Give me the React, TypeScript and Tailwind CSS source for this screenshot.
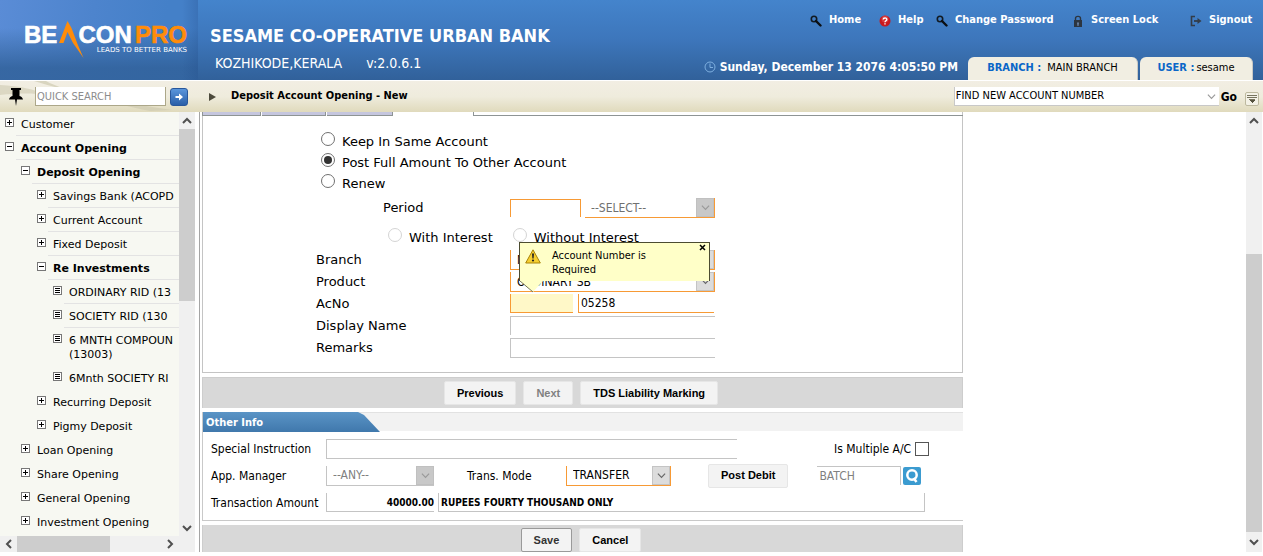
import React from "react";

type Kind = "plus" | "minus" | "leaf";

const TAHOMA = "font-['DejaVu_Sans_Condensed','DejaVu_Sans',sans-serif]";

const tree: { label: string; kind: Kind; indent: string; bold?: boolean; line?: boolean; sub?: string }[] = [
  { label: "Customer", kind: "plus", indent: "ml-0", line: true },
  { label: "Account Opening", kind: "minus", indent: "ml-0", bold: true, line: true },
  { label: "Deposit Opening", kind: "minus", indent: "ml-4", bold: true, line: true },
  { label: "Savings Bank (ACOPD", kind: "plus", indent: "ml-8", line: true },
  { label: "Current Account", kind: "plus", indent: "ml-8", line: true },
  { label: "Fixed Deposit", kind: "plus", indent: "ml-8", line: true },
  { label: "Re Investments", kind: "minus", indent: "ml-8", bold: true, line: true },
  { label: "ORDINARY RID (13", kind: "leaf", indent: "ml-12", line: true },
  { label: "SOCIETY RID (130", kind: "leaf", indent: "ml-12", line: true },
  { label: "6 MNTH COMPOUN", kind: "leaf", indent: "ml-12", sub: "(13003)" },
  { label: "6Mnth SOCIETY RI", kind: "leaf", indent: "ml-12" },
  { label: "Recurring Deposit", kind: "plus", indent: "ml-8" },
  { label: "Pigmy Deposit", kind: "plus", indent: "ml-8" },
  { label: "Loan Opening", kind: "plus", indent: "ml-4" },
  { label: "Share Opening", kind: "plus", indent: "ml-4" },
  { label: "General Opening", kind: "plus", indent: "ml-4" },
  { label: "Investment Opening", kind: "plus", indent: "ml-4" },
];

function TreeIcon({ kind }: { kind: Kind }) {
  return (
    <svg viewBox="0 0 9 9" className="size-[9px] shrink-0" shapeRendering="crispEdges" aria-hidden="true">
      <rect x="0.5" y="0.5" width="8" height="8" fill="#fff" stroke="#777" />
      {kind !== "leaf" && <path d="M2 4h5v1h-5z" fill="#000" />}
      {kind === "plus" && <path d="M4 2h1v5h-1z" fill="#000" />}
      {kind === "leaf" && <path d="M2 2h5v1h-5zM2 4h5v1h-5zM2 6h5v1h-5z" fill="#000" />}
    </svg>
  );
}

function Chevron({ dir, color = "#505050", thin }: { dir: "up" | "down" | "left" | "right"; color?: string; thin?: boolean }) {
  const d = {
    up: "M1 7L5 3L9 7",
    down: "M1 3L5 7L9 3",
    left: "M7 1L3 5L7 9",
    right: "M3 1L7 5L3 9",
  }[dir];
  return (
    <svg viewBox="0 0 10 10" className={`shrink-0 ${thin ? "size-[9px]" : "size-[10px]"}`} aria-hidden="true">
      <path d={d} fill="none" stroke={color} strokeWidth={thin ? 1.3 : 2} />
    </svg>
  );
}

function Sidebar() {
  return (
    <aside className="flex w-[195px] shrink-0 flex-col bg-[#f7f8f2]">
      <div className="flex min-h-0 flex-1">
        <nav aria-label="Main menu" className="min-w-0 flex-1 overflow-hidden font-['DejaVu_Sans',sans-serif] text-[11px] leading-[14px]">
          <ul>
            {tree.map((n) => (
              <li key={n.label} className={`flex ${n.indent}`}>
                <span className="flex w-4 shrink-0 justify-end pt-[6px] pr-[2px]">
                  <TreeIcon kind={n.kind} />
                </span>
                <a
                  href="#"
                  className={`min-w-0 flex-1 border-b pt-[6px] pb-[3px] pl-[5px] whitespace-nowrap text-black ${
                    n.line ? "border-[#e3e3e3]" : "border-transparent"
                  } ${n.bold ? "font-bold" : ""}`}
                >
                  {n.label}
                  {n.sub && <span className="block">{n.sub}</span>}
                </a>
              </li>
            ))}
          </ul>
        </nav>
        <div className="flex w-4 shrink-0 flex-col items-center bg-[#f0f0f0]">
          <span className="flex h-[17px] items-center"><Chevron dir="up" /></span>
          <span className="h-[172px] w-4 bg-[#cdcdcd]" />
          <span className="flex-1" />
          <span className="flex h-[17px] items-center"><Chevron dir="down" /></span>
        </div>
      </div>
      <div className="flex h-4 shrink-0 items-center bg-[#f0f0f0]">
        <span className="flex w-[17px] justify-center"><Chevron dir="left" /></span>
        <span className="h-4 w-[93px] bg-[#cdcdcd]" />
        <span className="flex-1" />
        <span className="flex w-[17px] justify-center"><Chevron dir="right" /></span>
        <span className="w-[17px]" />
      </div>
    </aside>
  );
}

function Logo() {
  return (
    <div className="w-[198px] shrink-0 bg-[linear-gradient(270deg,rgba(30,70,130,0.25)_0%,rgba(30,70,130,0)_8%),linear-gradient(180deg,rgba(49,97,154,0)_35%,rgba(49,97,154,0.85)_85%),linear-gradient(100deg,#5a8cd6_0%,#4d84cd_45%,#4480c8_80%)] pt-6 pl-6">
      <div className="relative w-[163px] font-['Liberation_Sans',sans-serif] text-[24px] leading-[22px] font-bold">
        <div className="flex justify-between [-webkit-text-stroke:0.6px]">
          <span className="text-white">BE</span>
          <span className="ml-[18px] text-white">CON</span>
          <span className="text-[#ff8c0a]">PRO</span>
        </div>
        <div className="text-right font-['DejaVu_Sans',sans-serif] text-[7px] leading-[8px] font-normal text-white">LEADS TO BETTER BANKS</div>
        <svg viewBox="0 0 26 38" className="absolute -top-[3px] left-[35px] h-[38px] w-[26px]" aria-hidden="true">
          <path d="M8.500 0L12.500 7L18.500 23L24.500 37L14 22L8.500 11L4.500 22H0Z" fill="#ff8c0a" />
        </svg>
      </div>
    </div>
  );
}

function KeyIcon() {
  return (
    <svg viewBox="0 0 12 12" className="size-3" aria-hidden="true">
      <circle cx="4" cy="4" r="2.700" fill="none" stroke="#111a22" strokeWidth="1.600" />
      <path d="M6 6L10.500 10.500" stroke="#0b0f14" strokeWidth="2.400" strokeLinecap="round" />
    </svg>
  );
}

function HelpIcon() {
  return (
    <svg viewBox="0 0 12 12" className="size-3" aria-hidden="true">
      <circle cx="6" cy="6" r="5.500" fill="#c8181c" />
      <circle cx="6" cy="4" r="3.500" fill="#e05050" opacity=".6" />
      <path d="M4.200 4.600C4.200 2.400 7.800 2.400 7.800 4.500C7.800 5.800 6 5.700 6 7.200M6 8.300V9.600" fill="none" stroke="#fff" strokeWidth="1.400" />
    </svg>
  );
}

function LockIcon() {
  return (
    <svg viewBox="0 0 12 12" className="size-3" aria-hidden="true">
      <path d="M3.500 6V3.500C3.500 .6 8.500 .6 8.500 3.500V6" fill="none" stroke="#2c3540" strokeWidth="1.400" />
      <rect x="2" y="5" width="8" height="7" fill="#2c3540" />
      <path d="M5 7.500h2l-.5 3.500h-1z" fill="#6c86a8" />
    </svg>
  );
}

function ExitIcon() {
  return (
    <svg viewBox="0 0 12 12" className="size-3" aria-hidden="true">
      <path d="M5 1.500H1.500V10.500H5" fill="none" stroke="#333c48" strokeWidth="1.600" />
      <path d="M4 6H9" stroke="#333c48" strokeWidth="1.800" />
      <path d="M7.500 3L11.500 6L7.500 9Z" fill="#333c48" />
    </svg>
  );
}

function TopLink({ icon, label, className }: { icon: React.ReactNode; label: string; className: string }) {
  return (
    <a href="#" className={`flex items-center gap-[7px] whitespace-nowrap ${className}`}>
      <span className="pt-[2px]">{icon}</span>
      {label}
    </a>
  );
}

function Header() {
  return (
    <header className={`flex h-20 shrink-0 bg-linear-to-b from-[#4484cc] via-[#3d76bb] to-[#31619a] text-white ${TAHOMA}`}>
      <Logo />
      <div className="flex-1 pt-6 pl-3">
        <h1 className="text-[18px] leading-6 font-bold whitespace-nowrap">SESAME CO-OPERATIVE URBAN BANK</h1>
        <p className="flex gap-6 pt-[7px] pl-[5px] text-[14px] leading-4">
          <span>KOZHIKODE,KERALA</span>
          <span>v:2.0.6.1</span>
        </p>
      </div>
      <div className="flex flex-col items-end justify-between pt-3 text-[11px] font-bold">
        <nav aria-label="Session" className="flex pr-[9px] leading-4">
          <TopLink icon={<KeyIcon />} label="Home" className="w-[69px]" />
          <TopLink icon={<HelpIcon />} label="Help" className="w-[57px]" />
          <TopLink icon={<KeyIcon />} label="Change Password" className="w-[136px]" />
          <TopLink icon={<LockIcon />} label="Screen Lock" className="w-[118px]" />
          <TopLink icon={<ExitIcon />} label="Signout" className="w-[64px]" />
        </nav>
        <div className="flex items-end pr-[10px]">
          <div className="flex h-[26px] items-center gap-1 pr-[10px] text-[12px] whitespace-nowrap">
            <svg viewBox="0 0 12 12" className="size-3" aria-hidden="true">
              <circle cx="6" cy="6" r="5" fill="none" stroke="#7fb0e0" />
              <path d="M6 2.500V6.500H9" fill="none" stroke="#7fb0e0" />
            </svg>
            Sunday, December 13 2076 4:05:50 PM
          </div>
          <div className="flex h-[23px] w-[170px] items-center justify-center gap-[6px] rounded-t-md border-r border-[#c9c9c4] bg-[#f1eee2] font-normal text-black">
            <b className="text-[#0a66c8]">BRANCH :</b>MAIN BRANCH
          </div>
          <div className="ml-[2px] flex h-[23px] w-[113px] items-center justify-center gap-[2px] rounded-t-md border-r border-[#c9c9c4] bg-[#f1eee2] font-normal text-black">
            <b className="text-[#0a66c8]">USER :</b>sesame
          </div>
        </div>
      </div>
    </header>
  );
}

function Toolbar() {
  return (
    <div className={`relative isolate flex h-8 shrink-0 border-t border-white bg-linear-to-b from-[#f2eee3] via-[#efecdd] to-[#e0dabc] text-[11px] ${TAHOMA}`}>
      <svg viewBox="0 0 200 31" className="absolute top-0 left-0 -z-10 h-[31px] w-[200px]" aria-hidden="true">
        <path d="M0 4C20 5 34 8 46 14C34 12 18 12 0 14Z" fill="#cfcab0" opacity=".6" />
        <path d="M34 0C60 8 110 20 172 29L150 30C110 22 64 10 46 0Z" fill="#cfcab0" opacity=".7" />
      </svg>
      <div className="flex w-[199px] shrink-0 items-center pl-2">
        <svg viewBox="0 0 16 18" className="mr-[11px] h-[18px] w-4" aria-hidden="true">
          <path d="M3 0H13V2H11.500V8C13.500 8.500 14.500 9.500 15 11.500H9L8 18L7 11.500H1C1.500 9.500 2.500 8.500 4.500 8V2H3Z" fill="#000" />
        </svg>
        <input
          aria-label="Quick search"
          placeholder="QUICK SEARCH"
          className="h-[19px] w-[131px] border-r border-b border-l border-[#aca789] bg-white px-[1px] outline-none placeholder:text-[#8c8c8c]"
        />
        <button type="button" aria-label="Search" className="ml-1 flex size-[18px] items-center justify-center rounded-[3px] border border-[#28579c] bg-linear-to-b from-[#5a96dc] to-[#2a5fa8]">
          <svg viewBox="0 0 10 10" className="size-[10px]" aria-hidden="true">
            <path d="M1.500 4H5V1.500L9 5L5 8.500V6H1.500Z" fill="#fff" />
          </svg>
        </button>
      </div>
      <div className="flex flex-1 items-center pl-[10px]">
        <svg viewBox="0 0 7 8" className="h-2 w-[7px]" aria-hidden="true"><path d="M0 0L7 4L0 8Z" fill="#4c4a3c" /></svg>
        <h2 className="ml-[15px] font-bold whitespace-nowrap">Deposit Account Opening - New</h2>
      </div>
      <div className="flex items-center pr-1">
        <div className="flex h-[19px] w-[265px] items-center border-b border-l border-[#c8c8c8] bg-white">
          <select aria-label="Find" className="h-full min-w-0 flex-1 appearance-none px-[1px] outline-none">
            <option>FIND NEW ACCOUNT NUMBER</option>
          </select>
          <span className="flex w-[15px] justify-center"><Chevron dir="down" color="#999" thin /></span>
        </div>
        <button type="button" className="ml-[2px] text-[12px] font-bold">Go</button>
        <button type="button" aria-label="More" className="mt-1 ml-2 flex h-[14px] w-[14px] items-center justify-center rounded-[2px] border border-[#bdb99f] bg-[#f3f1e6]">
          <svg viewBox="0 0 10 10" className="size-[10px]" shapeRendering="crispEdges" aria-hidden="true">
            <path d="M0 1h10v1h-10zM0 3h10v1h-10zM2 5h6v1h-6z" fill="#77745f" />
            <path d="M2 6H8L5 9Z" fill="#55523f" />
          </svg>
        </button>
      </div>
    </div>
  );
}

function Select({ id, value, box, border, arrow, text = "text-black", disabled, label }: {
  id?: string; value: string; box: string; border: string; arrow: string; text?: string; disabled?: boolean; label?: string;
}) {
  return (
    <div className={`flex h-5 bg-white ${box} ${border}`}>
      <select id={id} aria-label={label} disabled={disabled} className={`min-w-0 flex-1 appearance-none pl-[6px] opacity-100 outline-none ${text}`}>
        <option>{value}</option>
      </select>
      <span className={`flex w-[18px] shrink-0 items-center justify-center border ${arrow}`}>
        <Chevron dir="down" color={disabled ? "#999" : "#666"} thin />
      </span>
    </div>
  );
}

function Radio({ name, checked, disabled, label }: { name: string; checked?: boolean; disabled?: boolean; label: string }) {
  return (
    <label className="flex h-[21px] gap-[7px]">
      <input
        type="radio"
        name={name}
        defaultChecked={checked}
        disabled={disabled}
        className="mt-[1px] size-[14px] shrink-0 appearance-none rounded-full border border-[#707070] bg-white bg-clip-content p-[2px] checked:bg-[#333] disabled:border-[#d4d4d4]"
      />
      <span className="leading-[21px] whitespace-nowrap">{label}</span>
    </label>
  );
}

function AccountTooltip() {
  return (
    <div role="alert" className="absolute -top-[52px] left-[9px] z-10 w-[191px]">
      <div className="flex h-[39px] border-x border-t border-[#4c4c30] bg-[#ffffc8] pt-[6px] pl-[5px] text-[11px] leading-[14px]">
        <svg viewBox="0 0 16 15" className="h-[15px] w-4 shrink-0" aria-hidden="true">
          <path d="M8 .8L15.300 14H.7Z" fill="#f6cf30" stroke="#a88208" strokeLinejoin="round" />
          <path d="M7 4.500H9L8.600 9.500H7.400Z" fill="#222" />
          <circle cx="8" cy="11.500" r="1.100" fill="#222" />
        </svg>
        <p className="ml-[11px] w-[110px]">Account Number is Required</p>
      </div>
      <button type="button" aria-label="Close" className="absolute top-[2px] right-1 flex size-[7px]">
        <svg viewBox="0 0 7 7" className="size-[7px]" aria-hidden="true"><path d="M1 1L6 6M6 1L1 6" stroke="#000" strokeWidth="1.500" /></svg>
      </button>
      <svg viewBox="0 0 24 12" className="h-3 w-6" aria-hidden="true">
        <path d="M1 0H24L14 11Z" fill="#ffffc8" />
        <path d="M1 0L14 11" stroke="#77775a" fill="none" />
      </svg>
    </div>
  );
}

const ORANGE = "border-[#f79a35]";

function MaturityPanel() {
  return (
    <section className="border-x border-b border-[#c4c4c4] bg-white pb-[14px] font-['DejaVu_Sans',sans-serif] text-[13px]">
      <div className="-mx-px flex h-1">
        <span className="w-[59px] border-r border-b border-l border-[#8e9494] bg-[#c5c6de]" />
        <span className="ml-px w-[64px] border-r border-b border-[#8e9494] bg-[#c5c6de]" />
        <span className="ml-px w-[66px] border-r border-b border-[#8e9494] bg-[#c5c6de]" />
        <span className="w-[80px]" />
        <span className="flex-1 border-b border-l border-[#8e9494]" />
      </div>
      <div className="pt-[15px] pl-[118px]">
        <Radio name="maturity" label="Keep In Same Account" />
        <Radio name="maturity" label="Post Full Amount To Other Account" checked />
        <Radio name="maturity" label="Renew" />
      </div>
      <div className="flex items-center pt-1 pl-[180px]">
        <label htmlFor="period" className="w-[127px]">Period</label>
        <input id="period" disabled className={`h-[18px] w-[71px] border-x border-t bg-white ${ORANGE}`} />
        <Select label="Period unit" value="--SELECT--" disabled text="text-[#707070]" box={`ml-1 w-[130px] text-[12px] ${TAHOMA}`} border={`border-r border-b ${ORANGE}`} arrow="border-[#c0c0c0] bg-[#c8c8c8]" />
      </div>
      <div className="flex gap-5 pt-[9px] pl-[185px]">
        <Radio name="interest" label="With Interest" disabled />
        <Radio name="interest" label="Without Interest" disabled />
      </div>
      <div className="grid grid-cols-[194px_205px] gap-y-[2px] pt-[2px] pl-[113px] leading-5">
        <label htmlFor="branch">Branch</label>
        <Select id="branch" value="MAIN BRANCH" box={`text-[12px] ${TAHOMA}`} border={`border-x border-b ${ORANGE}`} arrow="border-[#c4c4c4] bg-[#dcdcdc]" />
        <label htmlFor="product">Product</label>
        <Select id="product" value="ORDINARY SB" box={`text-[12px] ${TAHOMA}`} border={`border-x border-b ${ORANGE}`} arrow="border-[#c4c4c4] bg-[#dcdcdc]" />
        <label htmlFor="acno">AcNo</label>
        <div className={`relative flex gap-[5px] text-[12px] ${TAHOMA}`}>
          <input id="acno" className={`h-[19px] w-[63px] border-b border-l bg-[#fff8c8] ${ORANGE}`} />
          <input aria-label="Account suffix" defaultValue="05258" className={`h-[19px] w-[136px] border-b border-l bg-white pl-[2px] ${ORANGE}`} />
          <AccountTooltip />
        </div>
        <label htmlFor="display">Display Name</label>
        <input id="display" className="h-[19px] border-t border-l border-[#c4c4c4] bg-white" />
        <label htmlFor="remarks">Remarks</label>
        <input id="remarks" className="h-5 border-y border-l border-[#c4c4c4] bg-white" />
      </div>
    </section>
  );
}

function BarButton({ children, muted, focused, disabled }: { children: React.ReactNode; muted?: boolean; focused?: boolean; disabled?: boolean }) {
  return (
    <button
      type="button"
      disabled={disabled}
      className={`h-6 rounded-[2px] border bg-[#f3f3f3] px-3 font-['Liberation_Sans',sans-serif] text-[11px] font-bold whitespace-nowrap ${
        focused ? "border-[#9a9a9a]" : "border-[#e6e6e6]"
      } ${disabled ? "text-[#808080]" : muted ? "text-[#333]" : "text-black"}`}
    >
      {children}
    </button>
  );
}

function OtherInfo() {
  return (
    <section className={`mt-1 h-[109px] border-b border-l border-[#c9c9c9] bg-white text-[12px] ${TAHOMA}`}>
      <div className="flex h-[19px] border-t border-[#e2e2e2] bg-[#f2f2f2]">
        <h3 className="-mt-px h-5 w-[177px] bg-linear-to-b from-[#5a94c6] to-[#4078ac] pl-[3px] text-[11px] leading-[22px] font-bold text-white [clip-path:polygon(0_0,155px_0,161px_3px,177px_100%,0_100%)]">Other Info</h3>
      </div>
      <div className="flex items-center pt-2 pl-2">
        <label htmlFor="special" className="w-[115px]">Special Instruction</label>
        <input id="special" className="h-5 w-[411px] border-y border-l border-[#c4c4c4]" />
        <label className="ml-[97px] flex items-center gap-1 whitespace-nowrap">
          Is Multiple A/C
          <input type="checkbox" className="size-[14px] appearance-none border border-[#555] bg-white" />
        </label>
      </div>
      <div className="flex h-[27px] items-center pt-[6px] pl-2">
        <label htmlFor="manager" className="w-[115px]">App. Manager</label>
        <Select id="manager" value="--ANY--" disabled text="text-[#808080]" box="w-[108px]" border="border-b border-l border-[#c4c4c4]" arrow="border-[#c0c0c0] bg-[#c8c8c8]" />
        <label htmlFor="mode" className="ml-[33px] w-[99px]">Trans. Mode</label>
        <Select id="mode" value="TRANSFER" box="w-[105px]" border={`border-x border-b ${ORANGE}`} arrow="border-[#c4c4c4] bg-[#dcdcdc]" />
        <span className="ml-[37px] flex"><BarButton>Post Debit</BarButton></span>
        <input aria-label="Batch" placeholder="BATCH" className="ml-[29px] h-[19px] w-[84px] border-t border-r border-[#c4c4c4] pl-[2px] placeholder:text-[#808080]" />
        <button type="button" aria-label="Find batch" className="ml-[2px] flex size-[18px] items-center justify-center rounded-[2px] bg-[#3b9bd0]">
          <svg viewBox="0 0 18 18" className="size-[18px]" aria-hidden="true">
            <circle cx="9" cy="8" r="4.700" fill="none" stroke="#fff" strokeWidth="2.500" />
            <path d="M10.500 11L13.500 15" stroke="#fff" strokeWidth="2.500" />
          </svg>
        </button>
      </div>
      <div className="flex items-center pt-[7px] pl-2">
        <label htmlFor="amount" className="w-[115px]">Transaction Amount</label>
        <input id="amount" defaultValue="40000.00" className="h-[19px] w-[108px] border-b border-l border-[#c4c4c4] text-right text-[10px] font-bold" />
        <input aria-label="Amount in words" defaultValue="RUPEES FOURTY THOUSAND ONLY" className="ml-1 h-[19px] w-[487px] border-r border-b border-l border-[#c4c4c4] pl-[2px] text-[10px] font-bold" />
      </div>
    </section>
  );
}

export default function App() {
  return (
    <div className="flex h-screen flex-col overflow-hidden bg-white pb-1 text-black">
      <Header />
      <Toolbar />
      <div className="flex min-h-0 flex-1">
        <Sidebar />
        <div className="mr-[2px] ml-1 w-px shrink-0 bg-[#a5a5a5]" />
        <main className="min-w-0 flex-1 overflow-hidden">
          <form className="max-w-[761px]" onSubmit={(e) => e.preventDefault()}>
            <MaturityPanel />
            <div className="mt-1 flex h-[31px] items-center justify-center gap-[7px] border border-b-0 border-[#cdcdcd] bg-[#d8d8d8] pr-[3px]">
              <BarButton>Previous</BarButton>
              <BarButton disabled>Next</BarButton>
              <BarButton>TDS Liability Marking</BarButton>
            </div>
            <OtherInfo />
            <div className="mt-1 flex h-[31px] items-start justify-center gap-[7px] border-x border-[#cdcdcd] bg-[#d8d8d8] pt-[3px] pr-[3px]">
              <BarButton muted focused>Save</BarButton>
              <BarButton>Cancel</BarButton>
            </div>
          </form>
        </main>
        <div className="mr-px flex w-4 shrink-0 flex-col items-center bg-[#f0f0f0]">
          <span className="flex h-[17px] items-center"><Chevron dir="up" /></span>
          <span className="flex-[125]" />
          <span className="w-4 flex-[278] bg-[#cdcdcd]" />
          <span className="flex h-5 items-center"><Chevron dir="down" /></span>
        </div>
      </div>
    </div>
  );
}
